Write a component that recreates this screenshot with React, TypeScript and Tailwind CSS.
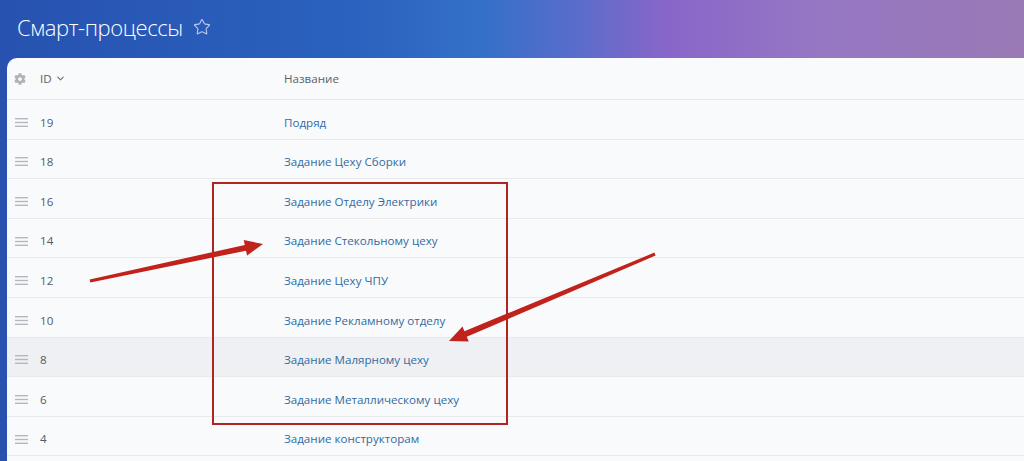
import { ChevronDown, Star } from "lucide-react";
import { FaCog } from "react-icons/fa";

const rows = [
  { id: 19, name: "Подряд" },
  { id: 18, name: "Задание Цеху Сборки" },
  { id: 16, name: "Задание Отделу Электрики" },
  { id: 14, name: "Задание Стекольному цеху" },
  { id: 12, name: "Задание Цеху ЧПУ" },
  { id: 10, name: "Задание Рекламному отделу" },
  { id: 8, name: "Задание Малярному цеху", hover: true },
  { id: 6, name: "Задание Металлическому цеху" },
  { id: 4, name: "Задание конструкторам" },
];

function DragHandle() {
  return (
    <svg width="13" height="9" viewBox="0 0 13 9" className="shrink-0">
      <rect x="0" y="0" width="13" height="1.4" fill="#b4b8be" />
      <rect x="0" y="3.8" width="13" height="1.4" fill="#b4b8be" />
      <rect x="0" y="7.6" width="13" height="1.4" fill="#b4b8be" />
    </svg>
  );
}

export default function App() {
  return (
    <div
      className="relative w-[1024px] h-[461px] overflow-hidden bg-[linear-gradient(90deg,#2752b0_0%,#2b62bf_35%,#3470c8_47%,#5d6ccb_57%,#8866c9_65%,#9677c3_80%,#9a79b5_100%)]"
      style={{ fontFamily: '"Open Sans", "Liberation Sans", sans-serif' }}
    >
      {/* title bar */}
      <div className="h-[58px] pl-[17px] flex items-center pb-[4px]">
        <h1 className="text-white text-[22px] font-light tracking-[-0.4px]">Смарт-процессы</h1>
        <Star className="ml-[10px] w-[18px] h-[18px] text-[#b9c8ee]" strokeWidth={1.5} />
      </div>

      {/* list panel */}
      <div className="ml-[7px] h-[403px] rounded-tl-[10px] bg-[#f9fafc] overflow-hidden text-[11.6px]">
        <div className="h-[42px] flex items-center border-b border-[#e3e6ea] text-[#5b6067]">
          <div className="w-[33px] pl-[7px] flex items-center">
            <FaCog className="w-[12px] h-[12px] text-[#b0b4ba]" />
          </div>
          <div className="w-[244px] flex items-center">
            <span>ID</span>
            <ChevronDown className="ml-[3px] w-[11px] h-[11px] text-[#6b7078]" strokeWidth={2.4} />
          </div>
          <span>Название</span>
        </div>

        {rows.map((r) => (
          <div
            key={r.id}
            className={`h-[39.6px] pt-[6px] flex items-center border-b border-[#e7e9ed] ${
              r.hover ? "bg-[#eef0f3]" : "bg-[#f9fafc]"
            }`}
          >
            <div className="w-[33px] pl-[8px] flex items-center">
              <DragHandle />
            </div>
            <div className="w-[244px] text-[#555a61]">{r.id}</div>
            <div className="text-[#336a9f]">{r.name}</div>
          </div>
        ))}
      </div>

      {/* annotation overlay */}
      <div className="absolute left-[212px] top-[182px] w-[296px] h-[243px] border-2 border-[#b3231f] pointer-events-none" />
      <svg className="absolute left-0 top-0 pointer-events-none" width="1024" height="461" viewBox="0 0 1024 461">
        <polygon
          fill="#c1221b"
          points="89.7,279.5 244.8,244.9 243.7,240.0 263,244 247.1,255.6 246.0,250.7 90.3,282.5"
        />
        <polygon
          fill="#c1221b"
          points="654.4,252.6 464.4,331.2 462.5,326.6 449,341 468.7,341.4 466.8,336.8 655.6,255.4"
        />
      </svg>
    </div>
  );
}
